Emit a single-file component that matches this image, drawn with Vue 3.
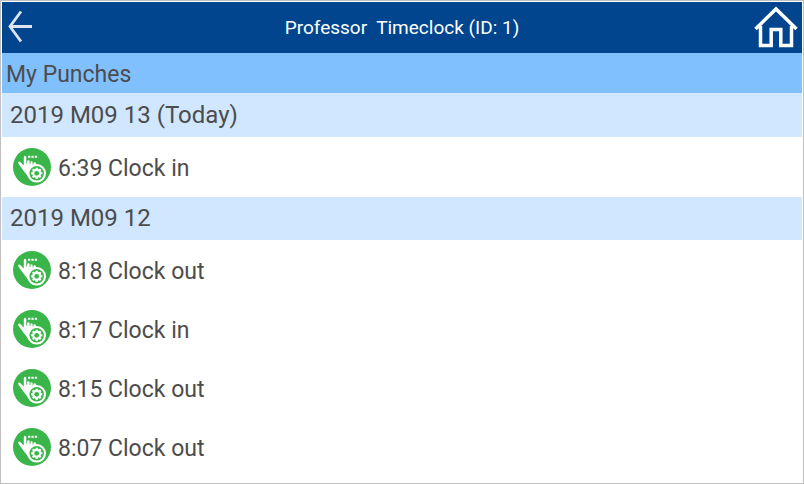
<script setup>
const days = [
  {
    label: '2019 M09 13 (Today)',
    punches: [{ time: '6:39', kind: 'Clock in' }],
  },
  {
    label: '2019 M09 12',
    punches: [
      { time: '8:18', kind: 'Clock out' },
      { time: '8:17', kind: 'Clock in' },
      { time: '8:15', kind: 'Clock out' },
      { time: '8:07', kind: 'Clock out' },
    ],
  },
]
const cogTeeth = [0, 45, 90, 135, 180, 225, 270, 315]
</script>

<template>
  <div class="screen">
    <header class="topbar">
      <button class="nav-button" type="button" aria-label="Back">
        <svg width="26" height="36" viewBox="0 0 26 36" fill="none" stroke="#dce4f0" stroke-width="2.8">
          <path d="M14 1.500 3 16.500 14 31.500M3 16.500H25" />
        </svg>
      </button>
      <h1 class="title">Professor&nbsp; Timeclock (ID: 1)</h1>
      <button class="nav-button home" type="button" aria-label="Home">
        <svg width="44" height="43" viewBox="0 0 44 43" fill="none" stroke="#fff" stroke-width="3.500">
          <path d="M1.500 23 22 3 42.500 23" />
          <path d="M6.500 20V39.500H17.200V23.500H26.800V39.500H37.500V20" />
        </svg>
      </button>
    </header>

    <main>
      <h2 class="heading">My Punches</h2>
      <section v-for="day in days" :key="day.label" class="day">
        <h3 class="date">{{ day.label }}</h3>
        <ul class="punches">
          <li v-for="punch in day.punches" :key="punch.time" class="punch">
            <svg class="badge" viewBox="0 0 38 38" aria-hidden="true">
              <circle cx="19" cy="19" r="19" fill="#39b54a" />
              <path
                fill="#fff"
                d="M10.800 9.300Q10.800 7.800 12 7.800Q13.300 7.800 13.300 9.300V15.500H14.200V13.200Q14.200 12.200 15.400 12.200Q16.600 12.200 16.600 13.200V16H17.400V14.200Q17.400 13.200 18.500 13.200Q19.600 13.200 19.600 14.200V16.500H20.400V15.200Q20.400 14.200 21.500 14.200Q22.700 14.200 23 15.400L24 19L18 32Q15 29.500 13.500 26.500L10 22L5.500 15.800Q4.800 14.200 5.600 13.700Q6.500 13.200 7.500 14.300L10.800 17.500Z"
              />
              <path fill="#fff" d="M15 7.800h2.300v2h-2.300zM18.400 7.800h2.300v2h-2.300zM21.800 7.800h2.300v2h-2.300z" />
              <circle cx="23.700" cy="25.300" r="9.300" fill="#fff" />
              <circle cx="23.700" cy="25.300" r="7.200" fill="#39b54a" />
              <g fill="#fff">
                <circle cx="23.700" cy="25.300" r="4.500" />
                <rect
                  v-for="angle in cogTeeth"
                  :key="angle"
                  x="22.600"
                  y="19.700"
                  width="2.200"
                  height="3"
                  :transform="`rotate(${angle} 23.700 25.300)`"
                />
              </g>
              <circle cx="23.700" cy="25.300" r="2.400" fill="#39b54a" />
            </svg>
            <span class="label">{{ punch.time }} {{ punch.kind }}</span>
          </li>
        </ul>
      </section>
    </main>
  </div>
</template>

<style>
body {
  background: #fff;
}
</style>

<style scoped>
.screen {
  box-sizing: border-box;
  min-height: 100vh;
  padding: 1px;
  border: 1px solid #c0c0c0;
  background: #fff;
  color: #4c4c4c;
  font-family: Roboto, sans-serif;
  font-size: 23px;
}

.topbar {
  display: grid;
  grid-template-columns: 56px 1fr 56px;
  align-items: center;
  height: 51px;
  background: #01458e;
}

.nav-button {
  display: flex;
  justify-self: start;
  padding: 0 5px;
  border: 0;
  background: none;
  cursor: pointer;
}

.home {
  justify-self: end;
  padding: 0 4px;
}

.title,
.heading,
.date {
  margin: 0;
  font-weight: 400;
}

.title {
  color: #fff;
  font-size: 19px;
  text-align: center;
}

.heading {
  padding: 4px 4px 0;
  background: #80c0ff;
  font-size: 23px;
  line-height: 36px;
}

.date {
  padding: 0 8px;
  background: #d0e7ff;
  font-size: 24px;
  line-height: 44px;
}

.day + .day .date {
  border-top: 1px solid #fff;
  line-height: 43px;
}

.punches {
  margin: 0;
  padding: 0;
  list-style: none;
}

.punch {
  display: flex;
  align-items: center;
  gap: 7px;
  padding: 11px 11px 10px;
}

.label {
  padding-top: 2px;
}

.badge {
  flex: none;
  width: 38px;
  height: 38px;
}
</style>
